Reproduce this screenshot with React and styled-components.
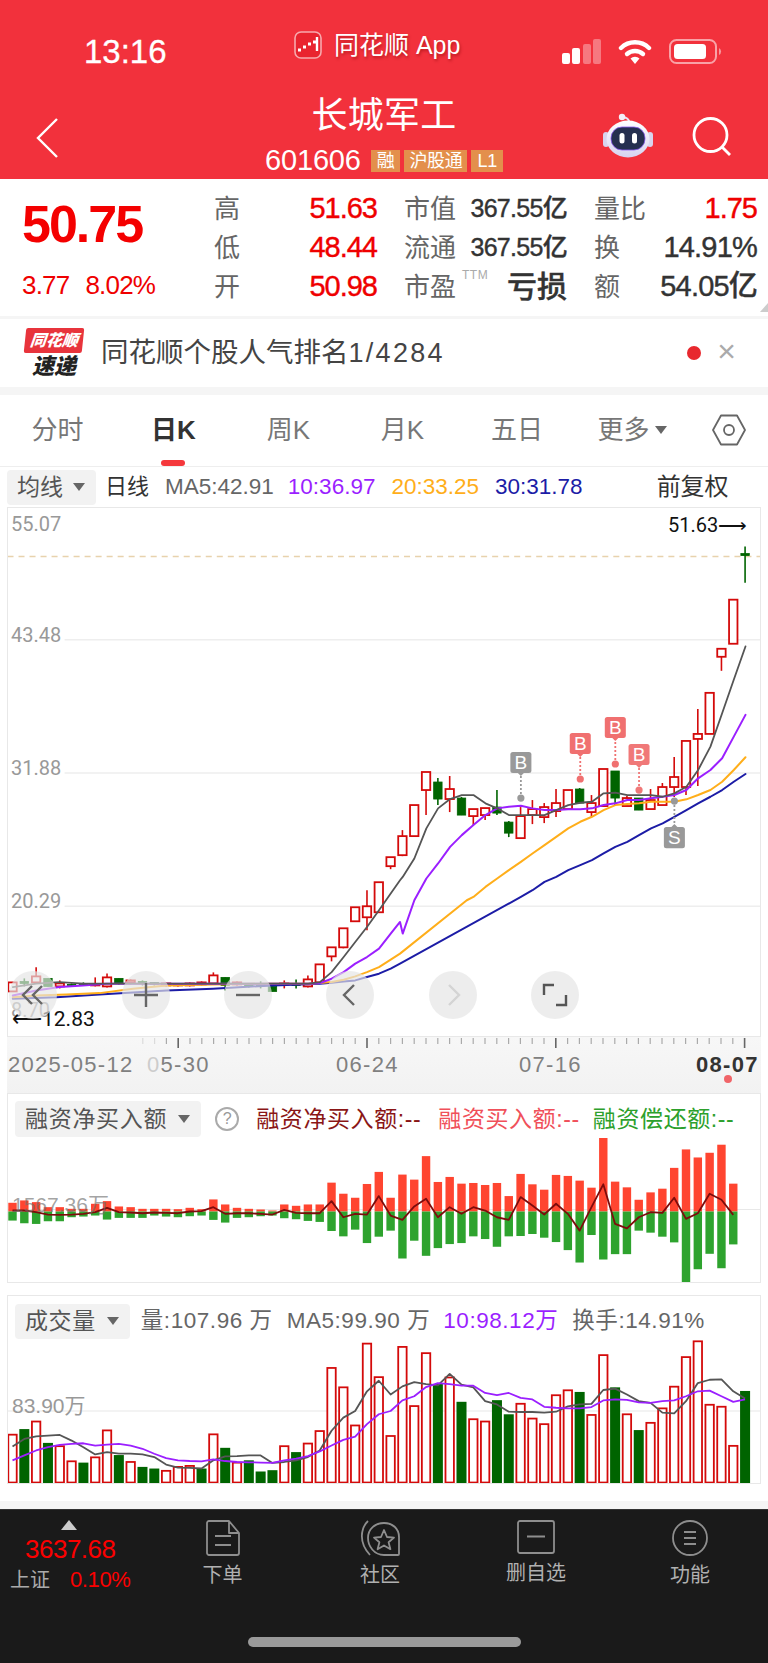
import React from 'react';
import styled, { createGlobalStyle } from 'styled-components';

const SANS = `"Liberation Sans","Noto Sans CJK SC",sans-serif`;

const Global = createGlobalStyle`
  html, body { margin: 0; padding: 0; background: #fff; }
  * { box-sizing: border-box; }
`;

const Page = styled.div`
  width: 768px; height: 1663px; overflow: hidden; background: #fff;
  display: flex; flex-direction: column; font-family: ${SANS};
`;

/* ---------- red header ---------- */
const Header = styled.header`
  height: 179px; flex: none; background: #f2313c; color: #fff;
  display: flex; flex-direction: column;
`;
const StatusBar = styled.div`
  height: 92px; flex: none; display: grid; grid-template-columns: 294px 268px 1fr; align-items: center; padding-top: 10px;
`;
const Clock = styled.div`
  font-size: 33px; font-weight: 500; padding-left: 84px; letter-spacing: 0; line-height: 1; -webkit-text-stroke: .3px #fff;
`;
const AppName = styled.div`
  display: flex; align-items: center; gap: 12px; font-size: 25px; line-height: 1; margin-top: -12px;
  text-shadow: 1px 2px 3px rgba(120,0,0,.45);
`;
const StatusIcons = styled.div`
  display: flex; align-items: center; gap: 17px;
`;
const NavBar = styled.div`
  flex: 1; display: grid; grid-template-columns: 1fr auto 1fr; align-items: center;
`;
const BackSlot = styled.div` padding-left: 35px; display: flex; margin-top: 4px; `;
const TitleCol = styled.div` display: flex; flex-direction: column; align-items: center; `;
const Title = styled.div` font-size: 36px; line-height: 42px; margin-top: -3px; letter-spacing: .2px; `;
const CodeRow = styled.div` display: flex; align-items: center; gap: 4px; margin-top: 11px; height: 26px; `;
const Code = styled.span` font-size: 29px; line-height: 1; margin-right: 6px; letter-spacing: -.2px; `;
const Tag = styled.span`
  height: 22px; padding: 0 ${p => p.$pad || 6}px; background: #e38f4c; color: #fff; font-size: 18px; line-height: 22px; display: block; letter-spacing: -.3px;
`;
const Actions = styled.div` display: flex; justify-content: flex-end; align-items: center; gap: 39px; padding-right: 36px; margin-top: 2px; `;

/* ---------- quote block ---------- */
const Quote = styled.section`
  height: 137px; flex: none; display: flex; background: #fff; position: relative;
`;
const PriceCol = styled.div`
  width: 214px; flex: none; padding: 19px 0 0 22px; display: flex; flex-direction: column;
`;
const BigPrice = styled.div`
  font-size: 52px; font-weight: 700; color: #f40000; line-height: 52px; letter-spacing: -2px;
`;
const ChangeRow = styled.div`
  display: flex; gap: 16px; margin-top: 20px; font-size: 26px; color: #ef0000; line-height: 30px; letter-spacing: -.8px;
`;
const Stats = styled.div`
  display: grid; grid-template-columns: 163px 163px 163px; grid-auto-rows: 39px; column-gap: 27px; padding-top: 10px;
`;
const Stat = styled.div` display: flex; justify-content: space-between; align-items: center; position: relative; `;
const StatLabel = styled.span` font-size: 26px; color: #666; line-height: 1; `;
const StatValue = styled.span`
  font-size: ${p => p.$size || 30}px; font-weight: ${p => p.$weight || 500}; color: ${p => p.$color || '#333'}; line-height: 1; letter-spacing: ${p => p.$ls ?? -1}px;
  -webkit-text-stroke: ${p => p.$stroke ? '.4px' : '0'} currentColor;
`;
const Ttm = styled.sup`
  position: absolute; left: 58px; top: 1px; font-size: 12px; color: #aaa; letter-spacing: .5px;
`;
const CornerMark = styled.i`
  position: absolute; right: 0; bottom: 4px; width: 0; height: 0;
  border-left: 8px solid transparent; border-bottom: 9px solid #ccc;
`;
const Sep = styled.div` height: ${p => p.$h}px; background: #f5f5f5; flex: none; `;

/* ---------- ticker ---------- */
const Ticker = styled.div`
  height: 68px; flex: none; display: flex; align-items: center; padding-left: 25px;
`;
const LogoWrap = styled.div` width: 58px; display: flex; flex-direction: column; align-items: center; margin-right: 18px; `;
const LogoTop = styled.div`
  width: 58px; height: 25px; background: #e8343c; color: #fff; font-size: 16px; font-weight: 900; font-style: italic; text-align: center; line-height: 25px;
  transform: skewX(-6deg); border-radius: 2px;
`;
const LogoBottom = styled.div` font-size: 22px; font-weight: 900; font-style: italic; color: #222; line-height: 24px; margin-top: 2px; `;
const TickerText = styled.div` font-size: 27.5px; color: #444; flex: 1; line-height: 1; span { letter-spacing: 2.3px; font-size: 27px; } `;
const LiveDot = styled.i` width: 14px; height: 14px; border-radius: 50%; background: #e8282e; margin-right: 16px; `;
const CloseMark = styled.span` font-size: 32px; color: #aaa; line-height: 1; margin-right: 32px; margin-top: -4px; font-weight: 300; `;

/* ---------- tabs ---------- */
const Tabs = styled.nav`
  height: 72px; flex: none; display: grid; grid-template-columns: 115px 117px 113px 115px 114px 116px 1fr; border-bottom: 1.5px solid #eee;
`;
const TabItem = styled.div`
  display: flex; align-items: center; justify-content: center; position: relative; gap: 5px; font-size: 26px; line-height: 1;
  color: ${p => p.$active ? '#333' : '#777'}; font-weight: ${p => p.$active ? 700 : 400};
  padding-bottom: 1px;
  ${p => p.$active && `&::after { content: ''; position: absolute; left: 46px; bottom: 0; width: 24px; height: 6px; border-radius: 3px; background: #f5383c; }`}
`;
const Caret = styled.i`
  width: 0; height: 0; border-left: 6px solid transparent; border-right: 6px solid transparent; border-top: 8px solid ${p => p.$color || '#666'}; display: block;
`;

/* ---------- MA row ---------- */
const MaRow = styled.div`
  height: 40px; flex: none; display: flex; align-items: center; padding: 0 7px;
`;
const SelectPill = styled.div`
  height: ${p => p.$h || 35}px; padding: 0 ${p => p.$pr || 11}px 0 ${p => p.$pl || 10}px; background: #f2f2f2; border-radius: 4px; display: flex; align-items: center; gap: ${p => p.$gap || 10}px;
  font-size: ${p => p.$size || 23}px; letter-spacing: ${p => p.$ls || 0}px; color: #555; line-height: 1; flex: none;
`;
const MaText = styled.span`
  font-size: ${p => p.$size || 22.5}px; color: ${p => p.$color}; margin-left: ${p => p.$ml}px; line-height: 1; white-space: nowrap; letter-spacing: ${p => p.$ls || 0}px;
`;

/* ---------- main chart ---------- */
const MainChart = styled.div`
  height: 530px; flex: none; margin: 0 7px; border: 1.5px solid #e8e8e8; position: relative; overflow: hidden;
  svg.plot { display: block; width: 100%; height: 100%; }
`;
const ChartLabel = styled.span`
  position: absolute; left: ${p => p.$x}px; top: ${p => p.$y}px; transform: translateY(-50%);
  font-size: ${p => p.$size || 20}px; color: ${p => p.$color || '#999'}; line-height: 1; white-space: nowrap; font-family: "Roboto", ${SANS};
`;
const RoundBtn = styled.button`
  position: absolute; left: ${p => p.$x - 24 - 8}px; top: ${995 - 24 - 508}px; width: 48px; height: 48px; border-radius: 50%; border: 0; padding: 0;
  background: rgba(228,228,228,.68); display: flex; align-items: center; justify-content: center;
`;

const AxisStrip = styled.div`
  height: 56px; flex: none; margin: 0 7px; background: linear-gradient(180deg,#f7f7f7 0%,#f2f2f2 100%); position: relative; overflow: hidden;
  svg { display: block; position: absolute; inset: 0; width: 100%; height: 14px; }
`;
const AxisDate = styled.span`
  position: absolute; left: ${p => p.$x - 7}px; top: 16px; font-size: 22px; line-height: 24px; letter-spacing: 1.3px; color: ${p => p.$color || '#808080'}; white-space: nowrap; font-weight: ${p => p.$w || 400};
  b { font-weight: 400; color: #ccc; }
`;
const RedPin = styled.i`
  position: absolute; left: 717px; top: 38px; width: 8px; height: 8px; border-radius: 50%; background: #f06468;
`;

/* ---------- sub panels ---------- */
const Panel = styled.section`
  height: ${p => p.$h}px; flex: none; margin: ${p => p.$mt || 0}px 7px 0; border: 1.5px solid #e8e8e8; position: relative; display: flex; flex-direction: column; overflow: hidden;
`;
const PanelHead = styled.div`
  height: 44px; flex: none; display: flex; align-items: center; padding: 7px 0 1px 7px;
`;
const PlotArea = styled.div`
  flex: 1; min-height: 0; svg { display: block; width: 100%; height: 100%; }
`;
const PanelLabel = styled.span`
  position: absolute; left: 4px; top: ${p => p.$y}px; transform: translateY(-50%); font-size: 21px; line-height: 1; color: ${p => p.$color || '#999'}; white-space: nowrap;
`;
const HelpIcon = styled.span`
  width: 24px; height: 24px; border: 2px solid #aaa; border-radius: 50%; color: #999; font-size: 16px; text-align: center; line-height: 20px; margin-left: 14px; flex: none;
`;

/* ---------- bottom bar ---------- */
const Foot = styled.footer`
  flex: 1; background: #1a1a1a; position: relative; border-top: 1px solid #333;
  display: grid; grid-template-columns: 145px 155px 160px 152px 156px; align-items: start;
`;
const IndexCol = styled.div`
  display: flex; flex-direction: column; padding: 10px 0 0 10px;
`;
const UpArrow = styled.i`
  width: 0; height: 0; border-left: 8.5px solid transparent; border-right: 8.5px solid transparent; border-bottom: 10px solid #ccc; margin-left: 51px;
`;
const IndexValue = styled.div` font-size: 26px; color: #fb0000; line-height: 28px; margin: 5px 0 0 15px; letter-spacing: -.5px; `;
const IndexRow = styled.div` display: flex; align-items: center; margin-top: 4px; line-height: 26px; `;
const IndexName = styled.span` font-size: 20px; color: #aaa; width: 60px; `;
const IndexPct = styled.span` font-size: 22px; color: #fb0000; letter-spacing: -.4px; `;
const FootItem = styled.div`
  display: flex; flex-direction: column; align-items: center; padding-top: 10px; gap: 7px;
`;
const FootLabel = styled.span` font-size: 20px; color: #b0b0b0; line-height: 24px; `;
const HomeBar = styled.i`
  position: absolute; left: 248px; top: 127px; width: 273px; height: 10px; border-radius: 5px; background: #9a9a9a;
`;

/* ---------- data ---------- */
const X = i => 13 + 11.8 * i;
// [idx, bodyTop, bodyBottom, wickTop, wickBottom, color]
const CANDLES = [
  [0,982,991,982,991,'r'],[1,981,983,978,986,'g'],[2,976,982,967,983,'r'],[3,978,986,978,986,'g'],[4,983,986,980,988,'r'],
  [5,984,985,983,986,'g'],[6,983,984,982,985,'g'],[7,984,985,977,986,'r'],[8,977,986,973,987,'r'],[9,978,983,978,984,'g'],
  [10,980,982,979,984,'r'],[11,981,983,980,985,'g'],[12,982,984,982,985,'g'],[13,983,985,982,986,'r'],[14,984,985,983,986,'r'],
  [15,983,985,982,986,'r'],[16,982,984,981,985,'r'],[17,975,983,972,984,'r'],[18,977,985,977,990,'g'],[19,982,984,981,985,'r'],
  [20,984,986,983,987,'g'],[21,984,985,981,988,'g'],[22,986,991,984,991,'g'],[23,983,984,980,988,'r'],[24,984,985,979,988,'g'],
  [25,979,986,975,987,'r'],[26,964,982,964,983,'r'],[27,947,956,947,961,'r'],[28,928,947,928,948,'r'],[29,907,921,907,921,'r'],
  [30,906,917,890,930,'r'],[31,882,912,882,912,'r'],[32,857,866,857,869,'r'],[33,836,855,830,856,'r'],
  [34,805,836,805,836,'r'],[35,772,790,772,815,'r'],[36,782,799,778,805,'g'],[37,789,799,776,812,'r'],[38,798,815,797,815,'g'],
  [39,809,816,809,825,'r'],[40,808,815,808,820,'r'],[41,807,813,790,815,'g'],[42,822,833,821,837,'g'],[43,816,838,807,838,'r'],
  [44,809,815,800,824,'r'],[45,807,817,803,823,'r'],[46,803,811,789,817,'r'],[47,790,809,790,809,'r'],[48,789,803,788,803,'g'],
  [49,803,812,795,817,'r'],[50,769,806,769,806,'r'],[51,771,798,771,806,'g'],[52,798,806,796,806,'r'],[53,798,810,798,810,'g'],
  [54,800,809,789,809,'r'],[55,787,805,783,805,'r'],[56,777,787,757,797,'r'],[57,741,787,741,795,'r'],[58,734,739,709,786,'r'],
  [59,693,734,693,734,'r'],[60,649,657,649,671,'r'],[61,600,644,600,644,'r'],[62,554,556,547,583,'g'],
];
const z4 = s => s.map(([a, b]) => `${(400 + a / 3).toFixed(1)},${(500 + b / 3).toFixed(1)}`).join(' ');
const z3 = s => s.map(([a, b]) => `${(a / 3).toFixed(1)},${(700 + b / 3).toFixed(1)}`).join(' ');

const MA5 = z3([[40,860],[110,850],[180,845],[252,850],[320,850],[500,850],[700,850],[925,850],[960,845],[995,815],[1031,770],[1066,725],[1101,680],[1137,630],[1172,580],[1200,540]]) + ' ' +
  z4([[8,1130],[43,1075],[79,985],[114,925],[150,897],[185,885],[220,885],[256,910],[291,925],[326,945],[362,945],[397,945],[433,945],[468,930],[504,915],[540,908],[575,905],[610,880],[645,878],[681,885],[716,885],[752,885],[787,890],[822,880],[858,860],[893,810],[930,740],[965,640],[1000,540],[1035,440]]);
const MA10 = z3([[40,885],[110,870],[180,860],[250,855],[320,850],[500,850],[700,850],[925,850],[960,848],[995,835],[1031,815],[1066,790],[1101,770],[1137,745],[1172,700],[1200,665]]) + ' ' +
  z4([[8,1300],[43,1200],[79,1135],[114,1090],[150,1040],[185,1005],[220,975],[256,945],[291,925],[326,920],[362,917],[397,925],[433,930],[468,930],[504,928],[540,928],[575,925],[610,915],[645,910],[681,900],[716,900],[752,895],[787,890],[822,885],[858,870],[893,835],[930,810],[965,775],[1000,710],[1035,645]]);
const MA20 = z3([[40,890],[110,885],[200,882],[300,878],[400,865],[500,855],[640,852],[810,850],[925,850],[960,848],[995,845],[1031,838],[1066,828],[1101,815],[1137,800],[1172,778],[1200,760]]) + ' ' +
  z4([[200,1200],[220,1190],[256,1160],[291,1135],[326,1110],[362,1085],[397,1060],[433,1035],[468,1010],[504,985],[540,965],[575,950],[610,930],[645,915],[681,912],[716,910],[752,905],[787,905],[822,905],[858,898],[893,885],[930,870],[965,845],[1000,810],[1035,772]]);
const MA30 = z3([[40,895],[170,890],[300,882],[500,870],[640,865],[820,855],[960,850],[995,847],[1031,843],[1066,840],[1101,830],[1137,820],[1172,805],[1200,790]]) + ' ' +
  z4([[362,1190],[397,1170],[433,1145],[468,1130],[504,1110],[540,1095],[575,1080],[610,1060],[645,1040],[681,1025],[716,1005],[752,985],[787,970],[822,950],[858,930],[893,910],[930,890],[965,870],[1000,845],[1035,822]]);

// [idx via position, redTopZ, greenBottomZ, lineZ]
const MARGIN = [[367,420,390],[360,428,390],[365,430,395],[380,422,402],[380,422,403],[385,410,402],[385,408,400],[370,405,395],[362,417,382],[378,412,395],[380,412,396],[385,412,398],[385,405,396],[385,408,397],[386,410,398],[382,407,393],[386,405,392],[357,418,380],[372,426,400],[382,412,398],[385,410,398],[387,407,400],[390,405,402],[372,413,388],[376,416,397],[372,421,398],[372,424,398],[307,451,362],[340,467,410],[352,447,400],[311,487,402],[275,468,347],[352,450,405],[283,533,418],[298,480,378],[228,525,355],[305,502,410],[290,490,380],[310,487,400],[308,467,380],[314,475,390],[308,498,410],[347,467,418],[281,466,350],[312,460,375],[328,471,402],[284,484,370],[287,508,400],[301,545,450],[322,463,380],[173,536,312],[304,520,430],[321,520,443],[358,450,410],[336,456,395],[325,468,397],[263,485,352],[208,605,415],[232,565,398],[218,519,340],[194,562,358],[310,491,403]];

// [topZ, colour, ma5Z, ma10Z]
const VOLUME = [[432,'r',468,510],[415,'g',445,495],[392,'r',437,480],[457,'g',435,470],[467,'r',433,463],[513,'r',450,460],[517,'g',470,458],[501,'r',492,465],[419,'r',485,462],[494,'g',490,460],[515,'r',490,465],[530,'g',492,475],[535,'g',500,490],[542,'r',523,503],[530,'r',532,510],[527,'r',533,512],[535,'g',535,513],[431,'r',510,507],[472,'g',498,512],[517,'r',497,515],[510,'g',495,516],[544,'g',495,517],[540,'g',518,518],[467,'r',515,510],[485,'g',510,505],[459,'r',500,497],[421,'r',480,483],[229,'r',420,465],[288,'r',380,448],[404,'r',360,438],[155,'r',300,400],[257,'r',268,370],[436,'r',310,360],[165,'r',285,328],[345,'r',272,315],[184,'r',278,287],[278,'g',282,275],[258,'r',247,278],[332,'g',280,283],[385,'r',288,283],[392,'r',330,305],[327,'g',340,312],[370,'g',362,305],[338,'r',363,320],[383,'r',363,325],[400,'r',365,347],[312,'r',362,350],[297,'r',346,352],[302,'g',340,352],[372,'r',338,348],[190,'r',296,328],[288,'g',292,325],[370,'r',310,326],[418,'g',330,334],[396,'r',335,335],[352,'r',365,330],[286,'r',367,328],[196,'r',330,315],[148,'r',275,300],[341,'r',265,298],[347,'r',264,315],[466,'r',300,332],[299,'g',322,325]];
const vy = z => 1290 + z / 3;
const my = z => 1080 + z / 3;

const RED = '#d40a0a';
const GREEN = '#006400';

const Candle = ({ c }) => {
  const [i, t, b, wt, wb, col] = c;
  const x = X(i);
  const color = col === 'r' ? RED : GREEN;
  return (
    <g>
      <line x1={x} x2={x} y1={wt} y2={wb} stroke={color} strokeWidth="1.6" />
      <rect x={x - 4.2} y={t} width="8.4" height={Math.max(b - t, 1)} fill={col === 'r' ? '#fff' : GREEN} stroke={color} strokeWidth={col === 'r' ? 1.8 : 0.8} />
    </g>
  );
};

const Marker = ({ x, dot, tagTop, color, label }) => {
  const below = tagTop > dot;
  return (
    <g>
      <line x1={x} x2={x} y1={dot} y2={below ? tagTop : tagTop + 21} stroke={color} strokeWidth="1.8" strokeDasharray="2 2" />
      <circle cx={x} cy={dot} r="3.6" fill={color} />
      <rect x={x - 10.5} y={tagTop} width="21" height="21" rx="2.5" fill={color} />
      <path d={below ? `M${x - 3} ${tagTop}L${x} ${tagTop - 3}L${x + 3} ${tagTop}Z` : `M${x - 3} ${tagTop + 21}L${x} ${tagTop + 24}L${x + 3} ${tagTop + 21}Z`} fill={color} />
      <text x={x} y={tagTop + 17} textAnchor="middle" fontSize="19" fill="#fff" fontFamily="Liberation Sans">{label}</text>
    </g>
  );
};

const MaLine = ({ pts, color, w = 1.8 }) => (
  <polyline points={pts} fill="none" stroke={color} strokeWidth={w} strokeLinejoin="round" strokeLinecap="round" />
);

const PriceSvg = () => (
  <svg className="plot" viewBox="8.5 508.5 751 527" preserveAspectRatio="none">
    {[640, 773, 906].map(y => <line key={y} x1="65" x2="760" y1={y} y2={y} stroke="#eeeeee" strokeWidth="1.5" />)}
    <line x1="8" x2="760" y1="557" y2="557" stroke="#e8d2ad" strokeWidth="1.5" strokeDasharray="6 5" />
    {CANDLES.map(c => <Candle key={c[0]} c={c} />)}
    <MaLine pts={MA30} color="#1c1ca6" w={2} />
    <MaLine pts={MA20} color="#ffae1a" w={2} />
    <MaLine pts={MA10} color="#9b1fff" w={2} />
    <MaLine pts={MA5} color="#555555" />
    <Marker x={520.7} dot={798} tagTop={752} color="#999999" label="B" />
    <Marker x={580} dot={779} tagTop={733} color="#f07070" label="B" />
    <Marker x={615} dot={764} tagTop={717} color="#f07070" label="B" />
    <Marker x={638.7} dot={790} tagTop={744} color="#f07878" label="B" />
    <Marker x={674} dot={801} tagTop={827} color="#999999" label="S" />
  </svg>
);

const MarginSvg = () => (
  <svg viewBox="8.5 1138 751 143" preserveAspectRatio="none">
    <line x1="8" x2="760" y1="1209" y2="1209" stroke="#e8e8e8" strokeWidth="1.2" />
    {MARGIN.map((m, i) => (
      <g key={i}>
        <rect x={X(i) - 4.2} y={my(m[0])} width="8.4" height={1211 - my(m[0])} fill="#ff4530" />
        <rect x={X(i) - 4.2} y="1211" width="8.4" height={my(m[1]) - 1211} fill="#2ea32e" />
      </g>
    ))}
    <polyline points={MARGIN.map((m, i) => `${X(i).toFixed(1)},${my(m[2]).toFixed(1)}`).join(' ')} fill="none" stroke="#7d0c0c" strokeWidth="1.8" strokeLinejoin="round" />
  </svg>
);

const VolumeSvg = () => (
  <svg viewBox="8.5 1338 751 145" preserveAspectRatio="none">
    <line x1="8" x2="760" y1="1410" y2="1410" stroke="#e8e8e8" strokeWidth="1.2" />
    {VOLUME.map((v, i) => v[1] === 'r'
      ? <rect key={i} x={X(i) - 4.2} y={vy(v[0])} width="8.4" height={1482.5 - vy(v[0])} fill="#fff" stroke={RED} strokeWidth="1.8" />
      : <rect key={i} x={X(i) - 5} y={vy(v[0])} width="10" height={1483 - vy(v[0])} fill={GREEN} />)}
    <polyline points={VOLUME.map((v, i) => `${X(i).toFixed(1)},${vy(v[2]).toFixed(1)}`).join(' ')} fill="none" stroke="#555" strokeWidth="1.8" strokeLinejoin="round" />
    <polyline points={VOLUME.map((v, i) => `${X(i).toFixed(1)},${vy(v[3]).toFixed(1)}`).join(' ')} fill="none" stroke="#9b1fff" strokeWidth="1.8" strokeLinejoin="round" />
  </svg>
);

const AxisTicks = () => (
  <svg viewBox="7 1037 754 14" preserveAspectRatio="none">
    {Array.from({ length: 52 }, (_, k) => k + 11).map(i => {
      const major = i === 14 || i === 30 || i === 46 || i === 62;
      return <line key={i} x1={X(i)} x2={X(i)} y1="1038" y2={major ? 1048 : 1044} stroke={major ? '#666' : '#aaa'} strokeWidth={major ? 1.6 : 1.2} opacity={i < 13 ? 0.35 : 1} />;
    })}
  </svg>
);

/* ---------- icons ---------- */
const AppIcon = () => (
  <svg width="28" height="28" viewBox="0 0 28 28">
    <rect x="1" y="1" width="26" height="26" rx="6" fill="#e9242f" stroke="#f7a9ad" strokeWidth="1.6" />
    <path d="M4 19h3M9 16h3M14 13h3M19 11h3" stroke="#fff" strokeWidth="3" />
    <path d="M23 6v14" stroke="#fff" strokeWidth="2.4" />
  </svg>
);
const SignalIcon = () => (
  <svg width="39" height="25" viewBox="0 0 39 25">
    <rect x="0" y="14" width="8" height="11" rx="2" fill="#fff" />
    <rect x="10" y="9" width="8" height="16" rx="2" fill="#fff" opacity=".98" />
    <rect x="21" y="5" width="8" height="20" rx="2" fill="#fff" opacity=".35" />
    <rect x="31" y="0" width="8" height="25" rx="2" fill="#fff" opacity=".35" />
  </svg>
);
const WifiIcon = () => (
  <svg width="34" height="25" viewBox="0 0 34 25">
    <path d="M3 9 A20 20 0 0 1 31 9" fill="none" stroke="#fff" strokeWidth="4.4" strokeLinecap="round" />
    <path d="M9 15 A12 12 0 0 1 25 15" fill="none" stroke="#fff" strokeWidth="4.4" strokeLinecap="round" />
    <path d="M12.5 19.5 A6.5 6.5 0 0 1 21.5 19.5 L17 25Z" fill="#fff" />
  </svg>
);
const BatteryIcon = () => (
  <svg width="54" height="25" viewBox="0 0 54 25">
    <rect x="1" y="1" width="46" height="23" rx="6.5" fill="none" stroke="#fff" strokeOpacity=".55" strokeWidth="2" />
    <rect x="5" y="5" width="32" height="15" rx="3.5" fill="#fff" />
    <path d="M50 9a4 4 0 0 1 0 7Z" fill="#fff" fillOpacity=".5" />
  </svg>
);
const BackIcon = () => (
  <svg width="26" height="42" viewBox="0 0 26 42">
    <path d="M22 2 L3 21 L22 40" fill="none" stroke="#fff" strokeWidth="2.4" />
  </svg>
);
const RobotIcon = () => (
  <svg width="50" height="50" viewBox="0 0 50 50">
    <defs>
      <linearGradient id="rb" x1="0" x2="0" y1="0" y2="1"><stop offset="0" stopColor="#fff" /><stop offset="1" stopColor="#d6d2f0" /></linearGradient>
    </defs>
    <path d="M19 5q7 0 8 7" fill="none" stroke="#e9e5f5" strokeWidth="1.8" />
    <circle cx="19" cy="5" r="3.2" fill="#f3eff8" />
    <rect x="0" y="20" width="6" height="15" rx="3" fill="#d8d4ee" />
    <rect x="44" y="20" width="6" height="15" rx="3" fill="#d8d4ee" />
    <ellipse cx="25" cy="27" rx="21.5" ry="18.5" fill="url(#rb)" />
    <rect x="8" y="15" width="34" height="23" rx="11" fill="#252f4f" stroke="#8b5cf0" strokeWidth=".8" />
    <rect x="16.5" y="21" width="5" height="10.5" rx="2.5" fill="#fff" />
    <rect x="29" y="21" width="5" height="10.5" rx="2.5" fill="#fff" />
  </svg>
);
const SearchIcon = () => (
  <svg width="40" height="40" viewBox="0 0 40 40">
    <circle cx="18.5" cy="18" r="16.5" fill="none" stroke="#fff" strokeWidth="2.8" />
    <path d="M30 30 L38 38" stroke="#fff" strokeWidth="2.8" />
  </svg>
);
const HexIcon = () => (
  <svg width="34" height="32" viewBox="0 0 34 32">
    <path d="M9 1.5h16L33 16l-8 14.5H9L1 16Z" fill="none" stroke="#666" strokeWidth="1.8" strokeLinejoin="round" />
    <circle cx="17" cy="16" r="5" fill="none" stroke="#666" strokeWidth="1.8" />
  </svg>
);
const Glyph = ({ d, color = '#666', w = 2.4 }) => (
  <svg width="30" height="30" viewBox="0 0 30 30"><path d={d} fill="none" stroke={color} strokeWidth={w} /></svg>
);
const DocIcon = () => (
  <svg width="34" height="36" viewBox="0 0 34 36">
    <path d="M3 1h20l10 12v20a2 2 0 0 1-2 2H3a2 2 0 0 1-2-2V3a2 2 0 0 1 2-2ZM23 1v12h10" fill="none" stroke="#8e8e8e" strokeWidth="1.8" strokeLinejoin="round" />
    <path d="M9 16h16M9 25h16" stroke="#8e8e8e" strokeWidth="2" />
  </svg>
);
const CommunityIcon = () => (
  <svg width="40" height="36" viewBox="0 0 40 36">
    <path d="M8 1C1 8-2 22 10 35" fill="none" stroke="#8e8e8e" strokeWidth="1.8" />
    <path d="M24 3c9 0 15 6 15 14v17a1 1 0 0 1-1 1H24C14 35 8 26 8 18 8 9 15 3 24 3Z" fill="none" stroke="#8e8e8e" strokeWidth="1.8" />
    <path d="M24 10l3 7 7 .6-5.4 4.6 1.8 7L24 25.4l-6.4 3.8 1.8-7-5.4-4.6 7-.6Z" fill="none" stroke="#8e8e8e" strokeWidth="1.8" strokeLinejoin="round" />
  </svg>
);
const RemoveIcon = () => (
  <svg width="38" height="34" viewBox="0 0 38 34">
    <rect x="1" y="1" width="36" height="32" rx="2" fill="none" stroke="#8e8e8e" strokeWidth="1.8" />
    <path d="M10 16.5h18" stroke="#8e8e8e" strokeWidth="2" />
  </svg>
);
const MenuIcon = () => (
  <svg width="36" height="36" viewBox="0 0 36 36">
    <circle cx="18" cy="18" r="17" fill="none" stroke="#8e8e8e" strokeWidth="1.8" />
    <path d="M12 12h12M12 18h12M12 24h12" stroke="#8e8e8e" strokeWidth="2" />
  </svg>
);

const Row = ({ label, value, color, size, weight, ls, stroke, children }) => (
  <Stat>
    <StatLabel>{label}</StatLabel>
    {children}
    <StatValue $color={color} $size={size} $weight={weight} $ls={ls} $stroke={stroke}>{value}</StatValue>
  </Stat>
);

export default function App() {
  return (
    <Page>
      <Global />
      <Header>
        <StatusBar>
          <Clock>13:16</Clock>
          <AppName><AppIcon />同花顺 App</AppName>
          <StatusIcons><SignalIcon /><WifiIcon /><BatteryIcon /></StatusIcons>
        </StatusBar>
        <NavBar>
          <BackSlot><BackIcon /></BackSlot>
          <TitleCol>
            <Title>长城军工</Title>
            <CodeRow>
              <Code>601606</Code>
              <Tag $pad={6}>融</Tag><Tag $pad={5}>沪股通</Tag><Tag $pad={6}>L1</Tag>
            </CodeRow>
          </TitleCol>
          <Actions><RobotIcon /><SearchIcon /></Actions>
        </NavBar>
      </Header>

      <Quote>
        <PriceCol>
          <BigPrice>50.75</BigPrice>
          <ChangeRow><span>3.77</span><span>8.02%</span></ChangeRow>
        </PriceCol>
        <Stats>
          <Row label="高" value="51.63" color="#ef0000" size={29} stroke />
          <Row label="市值" value="367.55亿" size={25} ls={-.7} stroke />
          <Row label="量比" value="1.75" color="#ef0000" size={29} stroke />
          <Row label="低" value="48.44" color="#ef0000" size={29} stroke />
          <Row label="流通" value="367.55亿" size={25} ls={-.7} stroke />
          <Row label="换" value="14.91%" size={29} ls={-.8} stroke />
          <Row label="开" value="50.98" color="#ef0000" size={29} stroke />
          <Row label="市盈" value="亏损" size={30} ls={0} stroke><Ttm>TTM</Ttm></Row>
          <Row label="额" value="54.05亿" size={29} ls={-.8} stroke />
        </Stats>
        <CornerMark />
      </Quote>
      <Sep $h={3} />
      <Ticker>
        <LogoWrap><LogoTop>同花顺</LogoTop><LogoBottom>速递</LogoBottom></LogoWrap>
        <TickerText>同花顺个股人气排名<span>1/4284</span></TickerText>
        <LiveDot />
        <CloseMark>×</CloseMark>
      </Ticker>
      <Sep $h={8} />

      <Tabs>
        <TabItem>分时</TabItem>
        <TabItem $active>日K</TabItem>
        <TabItem>周K</TabItem>
        <TabItem>月K</TabItem>
        <TabItem>五日</TabItem>
        <TabItem>更多<Caret /></TabItem>
        <TabItem><HexIcon /></TabItem>
      </Tabs>

      <MaRow>
        <SelectPill><span>均线</span><Caret /></SelectPill>
        <MaText $size={22} $color="#333" $ml={9}>日线</MaText>
        <MaText $color="#666" $ml={16}>MA5:42.91</MaText>
        <MaText $color="#9b1fff" $ml={14}>10:36.97</MaText>
        <MaText $color="#ffae1a" $ml={16}>20:33.25</MaText>
        <MaText $color="#1c1ca6" $ml={16}>30:31.78</MaText>
        <MaText $size={24} $color="#333" $ml={74}>前复权</MaText>
      </MaRow>

      <MainChart>
        <PriceSvg />
        <ChartLabel $x={3} $y={16}>55.07</ChartLabel>
        <ChartLabel $x={3} $y={127}>43.48</ChartLabel>
        <ChartLabel $x={3} $y={260}>31.88</ChartLabel>
        <ChartLabel $x={3} $y={393}>20.29</ChartLabel>
        <ChartLabel $x={3} $y={502}>8.70</ChartLabel>
        <ChartLabel $x={660} $y={17} $color="#111" $size={20}>51.63⟶</ChartLabel>
        <ChartLabel $x={4} $y={511} $color="#111" $size={21}>⟵12.83</ChartLabel>
        <RoundBtn $x={33}><Glyph d="M14 6 5 15l9 9M24 6l-9 9 9 9" /></RoundBtn>
        <RoundBtn $x={146}><Glyph d="M15 3v24M3 15h24" /></RoundBtn>
        <RoundBtn $x={248}><Glyph d="M3 15h24" /></RoundBtn>
        <RoundBtn $x={350}><Glyph d="M19 5 9 15l10 10" /></RoundBtn>
        <RoundBtn $x={453}><Glyph d="M11 5l10 10-10 10" color="#d4d4d4" /></RoundBtn>
        <RoundBtn $x={555}><Glyph d="M14 5H4v10M16 25h10V15" color="#555" /></RoundBtn>
      </MainChart>

      <AxisStrip>
        <AxisTicks />
        <AxisDate $x={8}>2025-05-12</AxisDate>
        <AxisDate $x={147}><b>0</b>5-30</AxisDate>
        <AxisDate $x={336}>06-24</AxisDate>
        <AxisDate $x={519}>07-16</AxisDate>
        <AxisDate $x={696} $color="#333" $w={700}>08-07</AxisDate>
        <RedPin />
      </AxisStrip>

      <Panel $h={190}>
        <PanelHead>
          <SelectPill $h={36} $size={23} $ls={.7} $gap={11}><span>融资净买入额</span><Caret /></SelectPill>
          <HelpIcon>?</HelpIcon>
          <MaText $size={23} $ls={.6} $color="#8a1616" $ml={17}>融资净买入额:--</MaText>
          <MaText $size={23} $ls={.6} $color="#f0505a" $ml={17}>融资买入额:--</MaText>
          <MaText $size={23} $ls={.6} $color="#2ca02c" $ml={13}>融资偿还额:--</MaText>
        </PanelHead>
        <PlotArea><MarginSvg /></PlotArea>
        <PanelLabel $y={110} $color="rgba(110,110,110,.65)">1567.36万</PanelLabel>
      </Panel>

      <Panel $h={189} $mt={12}>
        <PanelHead>
          <SelectPill $h={35} $ls={.6} $gap={11}><span>成交量</span><Caret /></SelectPill>
          <MaText $color="#666" $ml={11} $ls={.55}>量:107.96 万</MaText>
          <MaText $color="#666" $ml={14} $ls={.55}>MA5:99.90 万</MaText>
          <MaText $color="#9b1fff" $ml={13} $ls={.55}>10:98.12万</MaText>
          <MaText $color="#666" $ml={14} $ls={.55}>换手:14.91%</MaText>
        </PanelHead>
        <PlotArea><VolumeSvg /></PlotArea>
        <PanelLabel $y={109}>83.90万</PanelLabel>
      </Panel>

      <Sep $h={8} style={{ marginTop: 17 }} />

      <Foot>
        <IndexCol>
          <UpArrow />
          <IndexValue>3637.68</IndexValue>
          <IndexRow><IndexName>上证</IndexName><IndexPct>0.10%</IndexPct></IndexRow>
        </IndexCol>
        <FootItem><DocIcon /><FootLabel>下单</FootLabel></FootItem>
        <FootItem><CommunityIcon /><FootLabel>社区</FootLabel></FootItem>
        <FootItem><RemoveIcon /><FootLabel>删自选</FootLabel></FootItem>
        <FootItem><MenuIcon /><FootLabel>功能</FootLabel></FootItem>
        <HomeBar />
      </Foot>
    </Page>
  );
}
